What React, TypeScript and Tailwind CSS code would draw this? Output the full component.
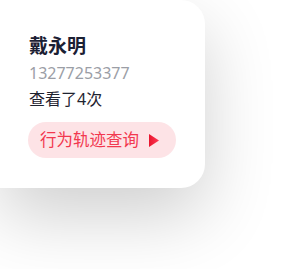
export default function App() {
  return (
    <div
      className="w-[282px] h-[269px] bg-white overflow-hidden"
      style={{ fontFamily: '"Noto Sans", "Noto Sans CJK SC", sans-serif' }}
    >
      <div className="w-[205px] h-[188px] bg-white rounded-r-[24px] shadow-[0_28px_70px_rgba(0,0,0,0.19)] pl-[29px] pt-[33px]">
        <div className="text-[19px] leading-[26px] font-bold text-[#1b2033]">戴永明</div>
        <div className="text-[16px] leading-[24px] text-[#9b9ea6] mt-[2px]">13277253377</div>
        <div className="text-[16px] leading-[24px] text-[#1f2330] mt-[2px]">查看了4次</div>
        <button className="mt-[11px] -ml-px h-[36px] w-[148px] rounded-full bg-[#fde3e6] flex items-center pl-[12px] gap-[10px]">
          <span className="text-[16.5px] leading-none text-[#f2384f]">行为轨迹查询</span>
          <svg width="10" height="13" viewBox="0 0 10 13">
            <defs>
              <linearGradient id="tri" x1="0" y1="0" x2="1" y2="0">
                <stop offset="0" stopColor="#e8152e" />
                <stop offset="1" stopColor="#ff3a55" />
              </linearGradient>
            </defs>
            <path d="M0 0 L10 6.5 L0 13 Z" fill="url(#tri)" />
          </svg>
        </button>
      </div>
    </div>
  );
}
